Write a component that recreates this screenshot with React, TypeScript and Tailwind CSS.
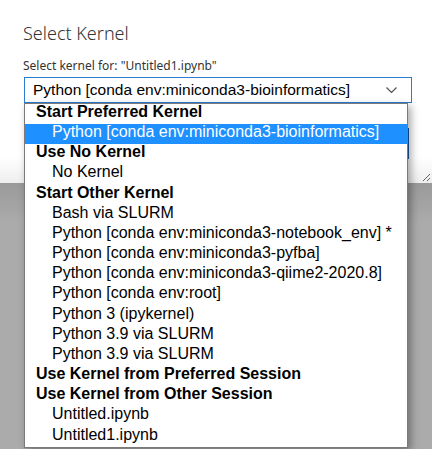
const kernels: { label: string; options: string[] }[] = [
  { label: "Start Preferred Kernel", options: ["Python [conda env:miniconda3-bioinformatics]"] },
  { label: "Use No Kernel", options: ["No Kernel"] },
  {
    label: "Start Other Kernel",
    options: [
      "Bash via SLURM",
      "Python [conda env:miniconda3-notebook_env] *",
      "Python [conda env:miniconda3-pyfba]",
      "Python [conda env:miniconda3-qiime2-2020.8]",
      "Python [conda env:root]",
      "Python 3 (ipykernel)",
      "Python 3.9 via SLURM",
      "Python 3.9 via SLURM",
    ],
  },
  { label: "Use Kernel from Preferred Session", options: [] },
  { label: "Use Kernel from Other Session", options: ["Untitled.ipynb", "Untitled1.ipynb"] },
];

const selected = "Python [conda env:miniconda3-bioinformatics]";

export default function App() {
  return (
    <div className="relative w-[432px] h-[449px] overflow-hidden bg-[#ababab]">
      {/* dialog */}
      <div className="relative h-[183px] bg-gradient-to-b from-white from-[86%] to-[#eeeeee] px-[23px] pt-[21px] font-['Segoe_UI','Noto_Sans',sans-serif] text-[#333]">
        <h2 className="text-[18px] leading-[24px] font-light text-[#333]">Select Kernel</h2>
        <div className="mt-[13px] text-[12px] leading-[16px] text-[#333]">Select kernel for: "Untitled1.ipynb"</div>
        <div className="ml-px mt-[3px] flex h-[26px] w-[388px] items-center justify-between border border-[#2b7cd3] bg-white pl-[8px] pr-[14px] font-['Liberation_Sans',Arial,sans-serif] text-[15.5px] text-black">
          <span>{selected}</span>
          <svg width="11" height="6" viewBox="0 0 11 6" fill="none">
            <path d="M0.5 0.5l5 5 5-5" stroke="#555" strokeWidth="1.2" />
          </svg>
        </div>
        <div className="mt-[25px] flex justify-end">
          <div className="h-[31px] w-[80px] border border-[#1a5aa8] bg-[#1e78d4]" />
        </div>
        {/* resize grip */}
        <svg className="absolute right-[1px] bottom-[1px]" width="9" height="9" viewBox="0 0 9 9">
          <path d="M8 1L1 8M8 5L5 8" stroke="#666" strokeWidth="1" />
        </svg>
      </div>
      <div className="h-[40px] bg-gradient-to-b from-[#9a9a9a] to-[#ababab]" />

      {/* open select list */}
      <div className="absolute left-[24px] top-[103px] w-[384px] border border-[#7a7a7a] bg-white font-['Liberation_Sans',Arial,sans-serif] text-[16px] leading-[16px] text-black shadow-[3px_3px_8px_rgba(0,0,0,0.35)]">
        {kernels.map((g) => (
          <div key={g.label}>
            <div className="h-[20.16px] pl-[11px] font-bold">{g.label}</div>
            {g.options.map((o, i) => (
              <div
                key={o + i}
                className={
                  o === selected
                    ? "h-[20.16px] bg-[#1e90ff] pl-[27px] text-white"
                    : "h-[20.16px] pl-[27px]"
                }
              >
                {o}
              </div>
            ))}
          </div>
        ))}
      </div>
    </div>
  );
}
